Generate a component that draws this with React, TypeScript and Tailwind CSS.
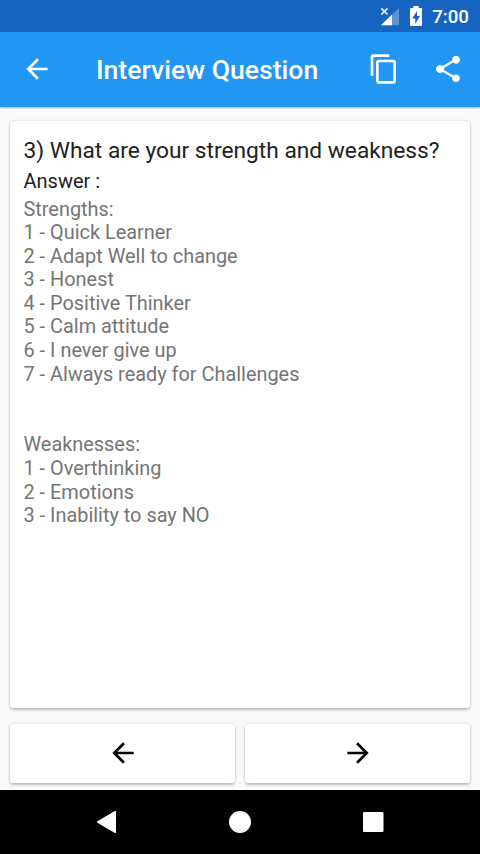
import type { ReactNode } from "react"

const strengths = [
  "Quick Learner",
  "Adapt Well to change",
  "Honest",
  "Positive Thinker",
  "Calm attitude",
  "I never give up",
  "Always ready for Challenges",
]

const weaknesses = ["Overthinking", "Emotions", "Inability to say NO"]

function Icon({ d, className = "" }: { d: string; className?: string }) {
  return (
    <svg viewBox="0 0 24 24" fill="currentColor" className={`size-8 shrink-0 ${className}`}>
      <path d={d} />
    </svg>
  )
}

const BACK = "M20 11H7.83l5.59-5.59L12 4l-8 8 8 8 1.41-1.41L7.83 13H20v-2z"
const FORWARD = "M12 4l-1.41 1.41L16.17 11H4v2h12.17l-5.58 5.59L12 20l8-8z"
const COPY =
  "M16 1H4c-1.1 0-2 .9-2 2v14h2V3h12V1zm3 4H8c-1.1 0-2 .9-2 2v14c0 1.1.9 2 2 2h11c1.1 0 2-.9 2-2V7c0-1.1-.9-2-2-2zm0 16H8V7h11v14z"
const SHARE =
  "M18 16.08c-.76 0-1.44.3-1.96.77L8.91 12.7c.05-.23.09-.46.09-.7s-.04-.47-.09-.7l7.05-4.11c.54.5 1.25.81 2.04.81 1.66 0 3-1.34 3-3s-1.34-3-3-3-3 1.34-3 3c0 .24.04.47.09.7L8.04 9.81C7.5 9.31 6.79 9 6 9c-1.66 0-3 1.34-3 3s1.34 3 3 3c.79 0 1.5-.31 2.04-.81l7.12 4.16c-.05.21-.08.43-.08.65 0 1.61 1.31 2.92 2.92 2.92 1.61 0 2.92-1.31 2.92-2.92s-1.31-2.92-2.92-2.92z"

function StatusBar() {
  return (
    <div className="flex h-8 shrink-0 items-center justify-end bg-[#1565c0] pr-[11px] text-white">
      {/* Signal, no connection */}
      <svg viewBox="0 0 20 20" className="mr-[9px] size-5">
        <path d="M19 2v17.300H1z" fill="#fff" fillOpacity=".3" />
        <path d="M12 8.500v10.800H1z" fill="#fff" />
        <path d="M1.300 2.300l6.200 6.200M7.500 2.300l-6.200 6.200" stroke="#e3f0fb" strokeWidth="1.700" />
      </svg>
      {/* Battery */}
      <svg viewBox="0 0 14 22" className="mr-[9px] h-[22px] w-3.5">
        <path
          d="M4.300 1h5.400v2H12a1 1 0 0 1 1 1v16a1 1 0 0 1-1 1H2a1 1 0 0 1-1-1V4a1 1 0 0 1 1-1h2.300z"
          fill="#fff"
        />
        <path d="M8 6v5h3l-4.800 8v-5.500H3.200z" fill="#1565c0" />
      </svg>
      <span className="mt-px text-[18.700px] leading-8 font-medium">7:00</span>
    </div>
  )
}

function Toolbar() {
  return (
    <header className="z-10 flex h-[74.500px] shrink-0 items-center bg-[#2196f3] pr-4 pl-[21px] text-white shadow-[0_1px_2px_rgba(0,0,0,0.3)]">
      <Icon d={BACK} />
      <h1 className="mt-0.5 ml-[43px] flex-1 text-[26.600px] leading-8 font-medium whitespace-nowrap">
        Interview Question
      </h1>
      <Icon d={COPY} className="mr-8" />
      <Icon d={SHARE} />
    </header>
  )
}

function Card({ className, children }: { className: string; children: ReactNode }) {
  return (
    <div
      className={`rounded-[3px] bg-white shadow-[0_2px_3px_rgba(0,0,0,0.22),0_0_3px_rgba(0,0,0,0.12)] ${className}`}
    >
      {children}
    </div>
  )
}

function Answer({ title, items }: { title: string; items: string[] }) {
  return (
    <div>
      <p>{title}</p>
      {items.map((item, i) => (
        <p key={item}>
          {i + 1} - {item}
        </p>
      ))}
    </div>
  )
}

function NavigationBar() {
  return (
    <nav className="flex h-16 shrink-0 items-center justify-center gap-[101px] bg-black text-white">
      <svg viewBox="0 0 32 32" fill="currentColor" className="size-8">
        <path d="M25 5.700v20.600a.8.8 0 0 1-1.200.7L6.400 16.700a.8.8 0 0 1 0-1.400L23.800 5a.8.8 0 0 1 1.200.7z" />
      </svg>
      <svg viewBox="0 0 32 32" fill="currentColor" className="size-8">
        <circle cx="16" cy="16" r="11" />
      </svg>
      <svg viewBox="0 0 32 32" fill="currentColor" className="size-8">
        <rect x="6" y="6" width="20.500" height="20" rx="1" />
      </svg>
    </nav>
  )
}

export default function App() {
  return (
    <div className="flex h-[854px] w-[480px] flex-col overflow-hidden bg-[#fafafa] font-['Roboto',sans-serif]">
      <StatusBar />
      <Toolbar />
      <main className="flex flex-1 flex-col px-2.5 pt-3.5 pb-[7px]">
        <Card className="flex-1 px-[13.500px] pt-[15px]">
          <h2 className="text-[22.720px] leading-[30px] whitespace-nowrap text-[#212121]">
            3) What are your strength and weakness?
          </h2>
          <h3 className="mt-[3px] text-[20px] leading-6 text-[#212121]">Answer :</h3>
          <div className="mt-[5px] flex flex-col gap-[47.200px] text-[19.900px] leading-[23.600px] text-[#757575]">
            <Answer title="Strengths:" items={strengths} />
            <Answer title="Weaknesses:" items={weaknesses} />
          </div>
        </Card>
        <div className="mt-[15.500px] flex gap-2.5 text-black">
          <Card className="flex h-[59.500px] flex-1 items-center justify-center">
            <Icon d={BACK} />
          </Card>
          <Card className="flex h-[59.500px] flex-1 items-center justify-center">
            <Icon d={FORWARD} />
          </Card>
        </div>
      </main>
      <NavigationBar />
    </div>
  )
}
